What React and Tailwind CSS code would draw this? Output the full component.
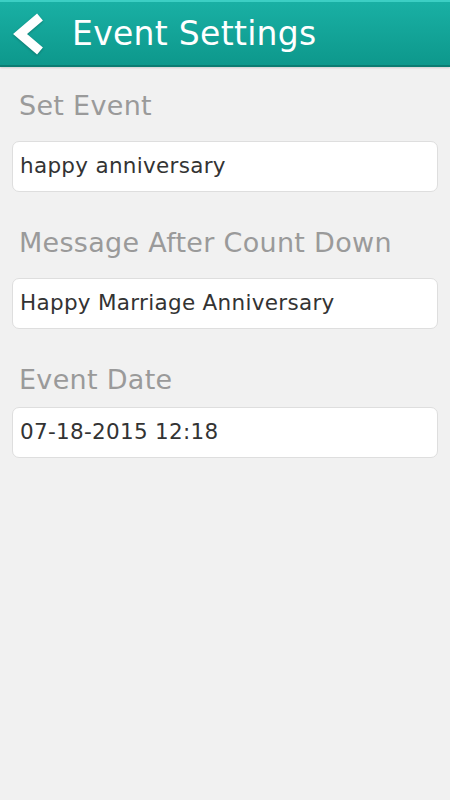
export default function App() {
  const fields = [
    { label: 'Set Event', value: 'happy anniversary', gap: 'mb-[18px]' },
    { label: 'Message After Count Down', value: 'Happy Marriage Anniversary', gap: 'mb-[18px]' },
    { label: 'Event Date', value: '07-18-2015 12:18', gap: 'mb-[10px]' },
  ];

  return (
    <div className="w-[450px] h-[800px] bg-[#f1f1f1] font-['DejaVu_Sans',sans-serif] overflow-hidden">
      <div className="h-[67px] bg-gradient-to-b from-[#19b0a4] to-[#0d988c] border-t-2 border-t-[#3ccfc4] border-b-2 border-b-[#0a7c72] shadow-[0_1px_2px_rgba(0,0,0,0.15)] flex items-center">
        <svg width="34" height="44" viewBox="0 0 34 44" className="ml-[12px] drop-shadow-[0_1px_1px_rgba(0,0,0,0.25)]">
          <polyline points="28,5 8,22 28,39" fill="none" stroke="#fff" strokeWidth="9" strokeLinejoin="miter" strokeLinecap="butt" />
        </svg>
        <h1 className="ml-[26px] text-white text-[33px] leading-none tracking-[0.3px]">Event Settings</h1>
      </div>

      <div className="pt-[22px]">
        {fields.map((f) => (
          <div key={f.label} className="mb-[34px]">
            <div className={`px-[19px] text-[27px] leading-[34px] text-[#9a9a9a] tracking-[0.3px] ${f.gap}`}>{f.label}</div>
            <div className="mx-[12px] h-[51px] bg-white border border-[#dedede] rounded-[7px] flex items-center px-[7px] text-[21.5px] text-[#333] tracking-[0.3px]">
              {f.value}
            </div>
          </div>
        ))}
      </div>
    </div>
  );
}
